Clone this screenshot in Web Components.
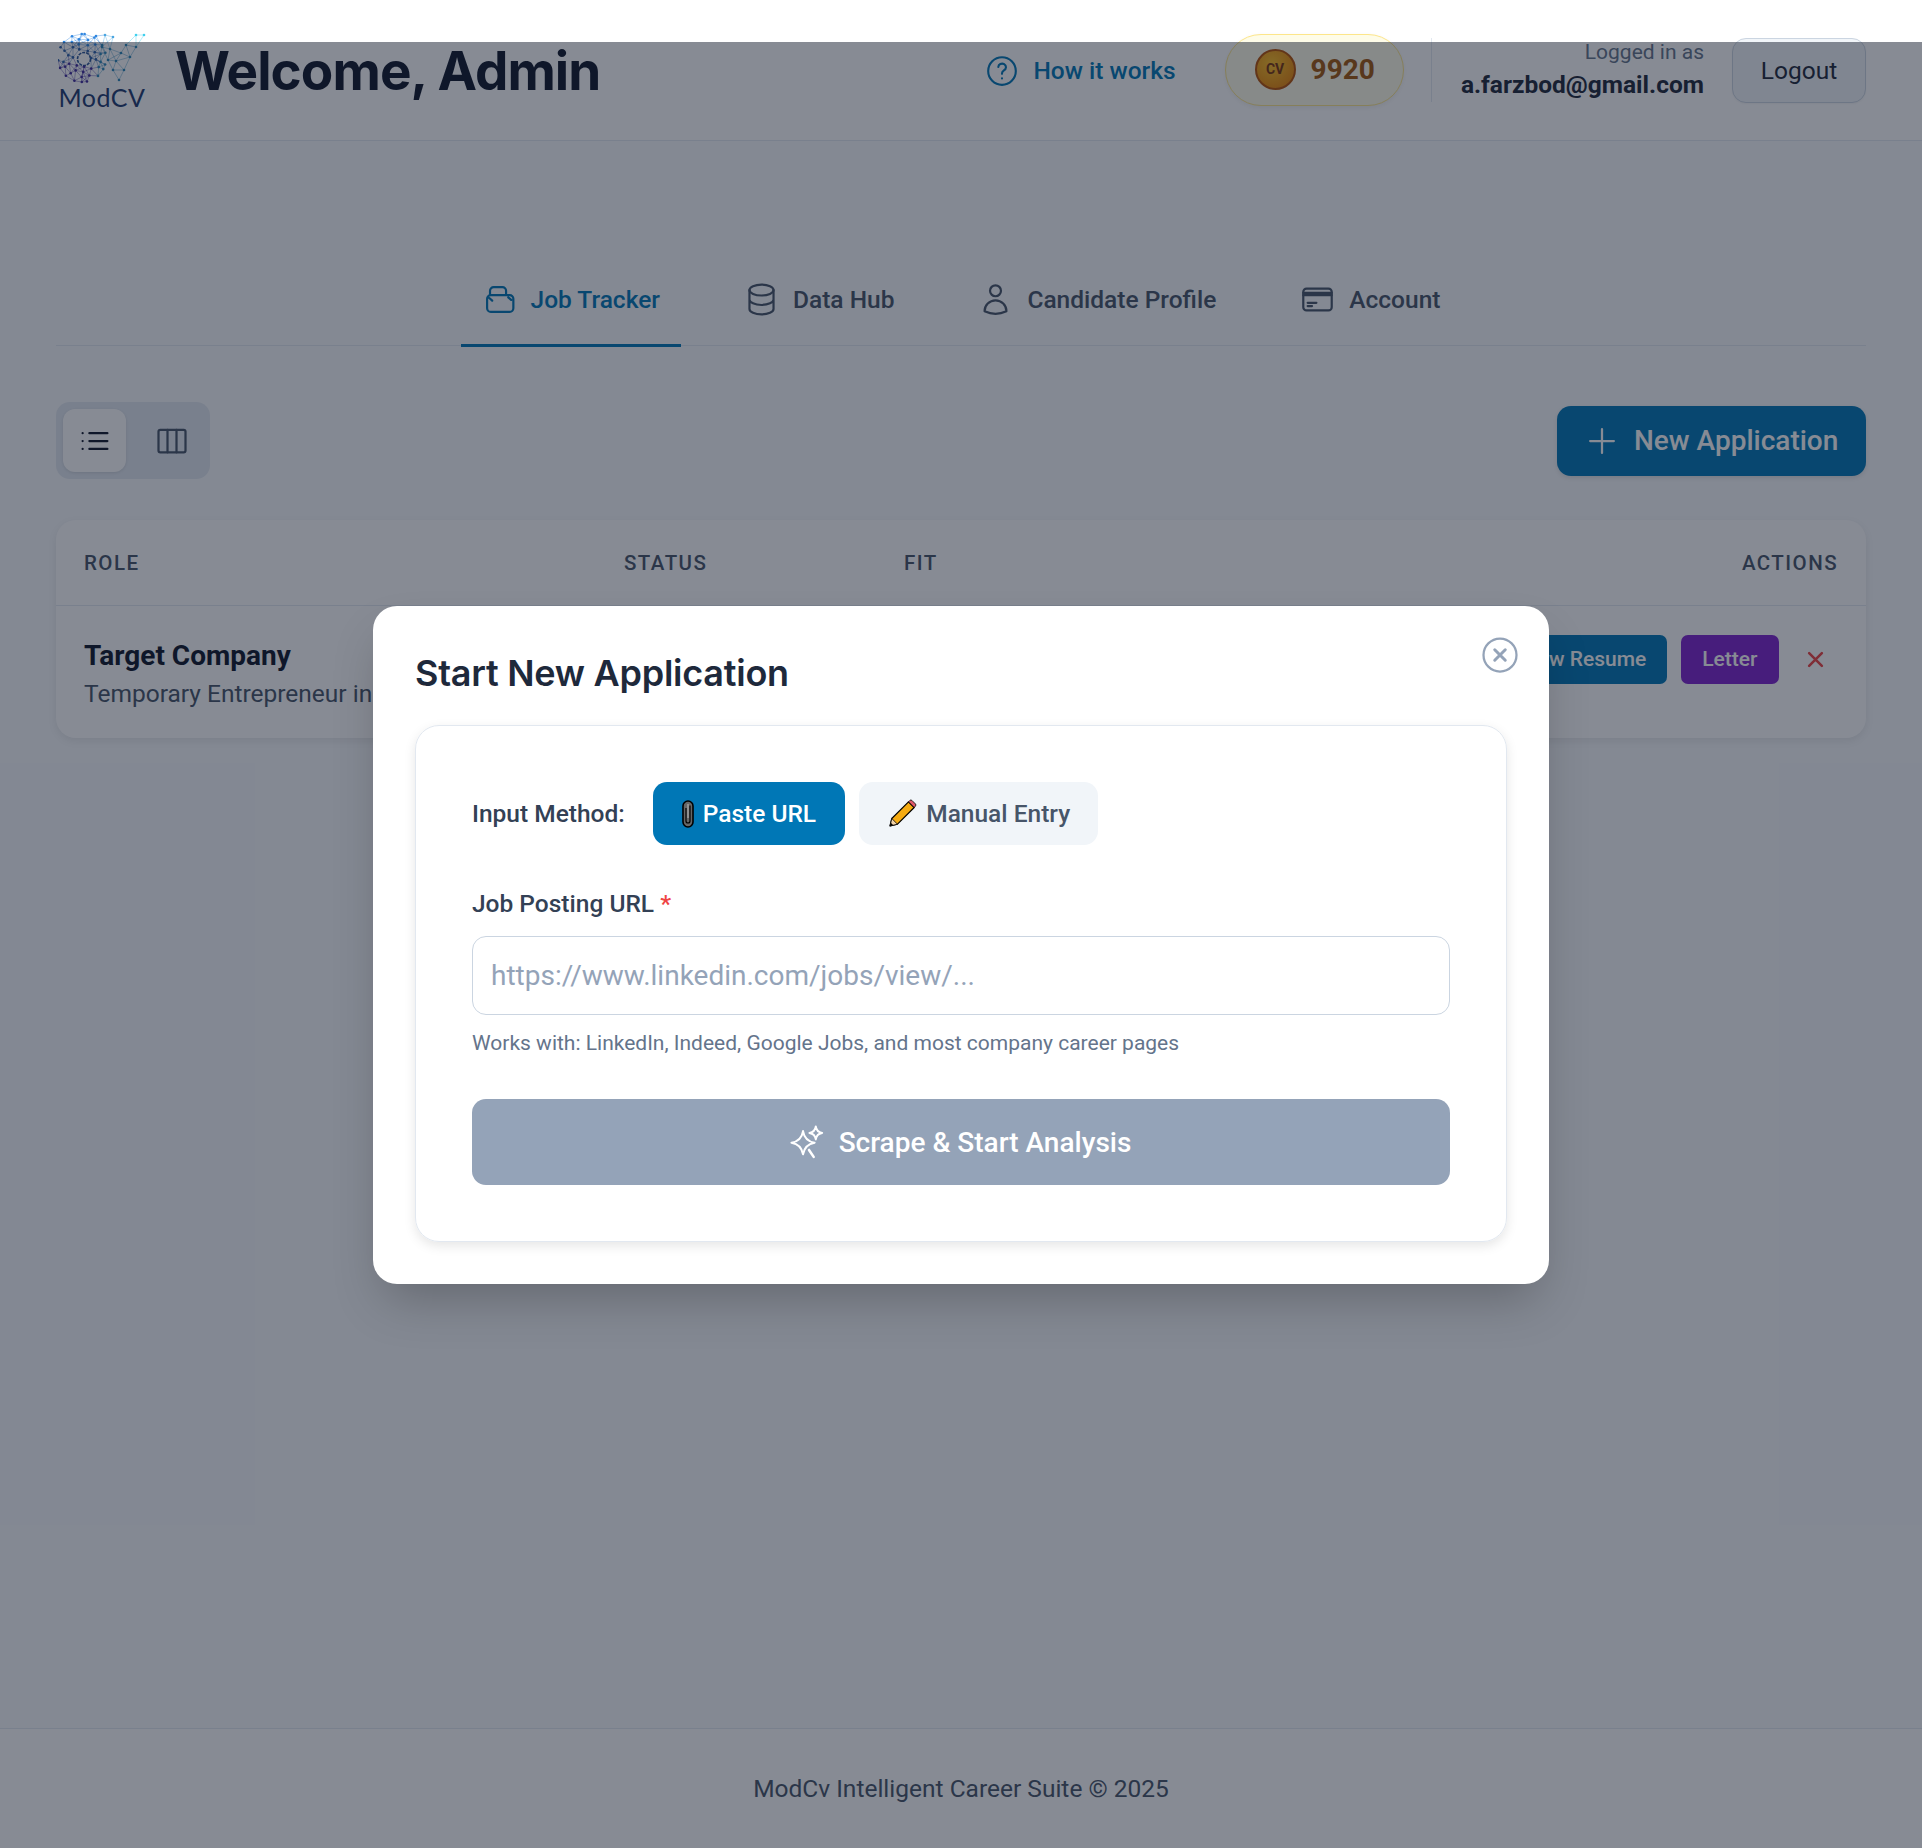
<!DOCTYPE html>
<html>
<head>
<meta charset="utf-8">
<title>ModCV</title>
<style>
  html, body { margin: 0; padding: 0; }
  body { background: #fff; font-family: Roboto, "Liberation Sans", sans-serif; }
</style>
</head>
<body>
<app-page></app-page>

<script>
const HEAD_FONT = 'Inter, "Liberation Sans", sans-serif';

class ModLogo extends HTMLElement {
  connectedCallback() {
    const root = this.attachShadow({mode: 'open'});
    // network mark, the nodes are seeded so every load draws the same thing
    let seed = 7;
    const rnd = () => (seed = (seed * 16807) % 2147483647) / 2147483647;
    const nodes = [];
    for (let r = 9; r <= 24; r += 5) {
      const n = Math.round(r * 0.7);
      for (let i = 0; i < n; i++) {
        const a = i / n * Math.PI * 2 + rnd() * 0.3;
        nodes.push([24 + Math.cos(a) * r, 25 + Math.sin(a) * r]);
      }
    }
    const vPts = [[38,3],[47,2],[55,4],[78,2],[86,2],[44,14],[52,16],[78,14],[50,27],[58,28],[72,24],[55,37],[66,37],[61,47],[68,12],[63,20]];
    const colorAt = (x, y) => {
      if (x > 70 && y < 10) return '#3fd0ee';
      if (x > 46 && y < 10) return '#4aa5e0';
      if (x > 40) return '#2a86b8';
      if (y < 14) return '#2f86e0';
      if (y < 30) return '#2a5fa8';
      return '#3f2b9c';
    };
    const lines = (pts, lim) => {
      let s = '';
      pts.forEach((p, i) => pts.forEach((q, j) => {
        if (j > i && Math.hypot(p[0]-q[0], p[1]-q[1]) < lim)
          s += `<line x1="${p[0].toFixed(1)}" y1="${p[1].toFixed(1)}" x2="${q[0].toFixed(1)}" y2="${q[1].toFixed(1)}" stroke="${colorAt(p[0], p[1])}"/>`;
      }));
      return s;
    };
    const dots = pts => pts.map(p => `<circle cx="${p[0].toFixed(1)}" cy="${p[1].toFixed(1)}" r="1.3" fill="${colorAt(p[0], p[1])}"/>`).join('');
    root.innerHTML = `
      <style>
        :host { display: flex; flex-direction: column; align-items: center; width: 88px; height: 77px; flex: none; }
        svg { display: block; width: 88px; height: 54px; flex: none; }
        span { font: 400 25px/23px Lato, sans-serif; color: #1e3a70; letter-spacing: .5px; }
      </style>
      <svg viewBox="0 -1 88 54" stroke-width=".45" stroke-opacity=".85">
        ${lines(nodes, 11)}${lines(vPts, 15)}
        <circle cx="26" cy="26" r="6.500" fill="none" stroke="#2a5596" stroke-width="1.600" stroke-opacity="1" stroke-dasharray="3 1"/>
        ${dots(nodes)}${dots(vPts)}
      </svg>
      <span>ModCV</span>`;
  }
}

class CoinPill extends HTMLElement {
  constructor() {
    super();
    this.attachShadow({mode: 'open'}).innerHTML = `
      <style>
        :host { display: flex; align-items: center; gap: 15px; box-sizing: border-box; height: 72px; padding: 0 28px 0 29px;
          margin-top: -1px; border: 1px solid #fde68a; border-radius: 36px; background: #fefce8;
          box-shadow: 0 2px 5px rgba(0,0,0,.06); }
        .coin { width: 41px; height: 41px; box-sizing: border-box; border-radius: 50%; border: 2px solid #b45309;
          background: radial-gradient(circle at 40% 35%, #fbbf24, #e8890a 75%);
          color: #78350f; font: 700 14px/37px Roboto, sans-serif; text-align: center; }
        b { font: 700 28px Roboto, sans-serif; color: #a0580f; }
      </style>
      <div class="coin">CV</div><b><slot></slot></b>`;
  }
}

class TabItem extends HTMLElement {
  constructor() {
    super();
    this.attachShadow({mode: 'open'}).innerHTML = `
      <style>
        :host { display: flex; align-items: center; gap: 14px; box-sizing: border-box; height: 101px; padding: 8px 21px 0;
          margin-bottom: -2px; border-bottom: 3px solid transparent;
          font: 500 24.5px Roboto, sans-serif; color: #475569; }
        :host([active]) { color: #0077b6; border-bottom-color: #0077b6; }
        ::slotted(svg) { width: 35px; height: 35px; flex: none; fill: none; stroke: currentColor; stroke-width: 1.5; stroke-linecap: round; stroke-linejoin: round; }
      </style>
      <slot name="icon"></slot><slot></slot>`;
  }
}

class AppHeader extends HTMLElement {
  constructor() {
    super();
    this.attachShadow({mode: 'open'}).innerHTML = `
      <style>
        :host { display: flex; align-items: center; box-sizing: border-box; height: 141px; padding: 0 56px 0 58px;
          background: #fff; border-bottom: 1px solid #e2e8f0; }
        h1 { margin: 0 0 0 29px; padding-top: 2px; font: 700 53px/1 ${HEAD_FONT}; letter-spacing: -.9px; color: #0f172a; white-space: nowrap; }
        .right { margin-left: auto; display: flex; align-items: center; }
        .how { display: flex; align-items: center; gap: 14px; margin-right: 49px; margin-top: 1px; font: 500 24.5px Roboto, sans-serif; color: #0077b6; }
        .how svg { width: 34px; height: 34px; fill: none; stroke: currentColor; stroke-width: 1.5; stroke-linecap: round; stroke-linejoin: round; }
        .sep { width: 1px; height: 64px; background: #e2e8f0; margin: 0 29px 0 27px; }
        .who { display: flex; flex-direction: column; align-items: flex-end; margin-top: -2px; }
        .who span { font: 400 21px/28px Roboto, sans-serif; color: #64748b; margin-bottom: 3px; }
        .who b { font: 700 24.5px/32px Roboto, sans-serif; color: #1e293b; }
        button { margin-left: 28px; height: 65px; width: 134px; border: 1px solid #cbd5e1; border-radius: 14px; background: #f1f5f9;
          font: 400 24.5px Roboto, sans-serif; color: #1e293b; padding: 0; box-shadow: 0 1px 2px rgba(0,0,0,.05); }
      </style>
      <mod-logo></mod-logo>
      <h1>Welcome, Admin</h1>
      <div class="right">
        <div class="how">
          <svg viewBox="0 0 24 24"><circle cx="12" cy="12" r="9.75"/><path d="M9.4 9.2a2.7 2.5 0 1 1 4 2.3c-.9.6-1.4 1-1.4 2v.5M12 17.2v.01"/></svg>
          How it works
        </div>
        <coin-pill>9920</coin-pill>
        <div class="sep"></div>
        <div class="who"><span>Logged in as</span><b>a.farzbod@gmail.com</b></div>
        <button>Logout</button>
      </div>`;
  }
}

class TabBar extends HTMLElement {
  constructor() {
    super();
    this.attachShadow({mode: 'open'}).innerHTML = `
      <style>
        :host { display: flex; justify-content: center; gap: 42px; height: 100px; box-sizing: border-box; border-bottom: 1px solid #e2e8f0; }
      </style>
      <tab-item active>
        <svg slot="icon" viewBox="0 0 24 24"><path d="M3.500 11.500A2.500 2.500 0 0 1 6 9h13a2.500 2.500 0 0 1 2.500 2.500V18a2.500 2.500 0 0 1-2.500 2.500H6A2.500 2.500 0 0 1 3.500 18zM5.500 8V6A2.500 2.500 0 0 1 8 3.500h6A2.500 2.500 0 0 1 16.500 6v2M5 11l2 1.800M18 10.500l2 1.800"/></svg>
        Job Tracker
      </tab-item>
      <tab-item>
        <svg slot="icon" viewBox="0 0 24 24"><ellipse cx="12" cy="5.500" rx="8.250" ry="3.750"/><path d="M3.750 5.500v13c0 2 3.700 3.750 8.250 3.750s8.250-1.750 8.250-3.750v-13M3.750 12c0 2 3.700 3.750 8.250 3.750s8.250-1.750 8.250-3.750"/></svg>
        Data Hub
      </tab-item>
      <tab-item>
        <svg slot="icon" viewBox="0 0 24 24"><circle cx="12" cy="6" r="3.750"/><path d="M4.500 20.100a7.500 7.500 0 0 1 15 0 18 18 0 0 1-15 0z"/></svg>
        Candidate Profile
      </tab-item>
      <tab-item>
        <svg slot="icon" viewBox="0 0 24 24"><rect x="2.250" y="4.500" width="19.500" height="15" rx="2.250"/><path d="M2.250 9h19.500M2.250 7.500h19.500M5.250 14.250h6M5.250 16.500h3"/></svg>
        Account
      </tab-item>`;
  }
}

class ViewToggle extends HTMLElement {
  constructor() {
    super();
    this.attachShadow({mode: 'open'}).innerHTML = `
      <style>
        :host { display: flex; gap: 14px; box-sizing: border-box; width: 154px; height: 77px; padding: 7px; border-radius: 14px; background: #e2e8f0; }
        div { width: 63px; height: 63px; border-radius: 12px; display: flex; align-items: center; justify-content: center; color: #475569; }
        .on { background: #fff; color: #0f172a; box-shadow: 0 1px 3px rgba(0,0,0,.1); }
        svg { width: 36px; height: 36px; fill: none; stroke: currentColor; stroke-width: 1.5; stroke-linecap: round; stroke-linejoin: round; }
      </style>
      <div class="on"><svg viewBox="0 0 24 24"><path d="M8.250 6.750h12M8.250 12h12M8.250 17.250h12M3.750 6.750h.01M3.750 12h.01M3.750 17.250h.01" /></svg></div>
      <div><svg viewBox="0 0 24 24"><rect x="3" y="4.500" width="18" height="15" rx="1.200"/><path d="M9 4.500v15M15 4.500v15"/></svg></div>`;
  }
}

class JobTable extends HTMLElement {
  constructor() {
    super();
    this.attachShadow({mode: 'open'}).innerHTML = `
      <style>
        :host { display: block; margin-top: 41px; background: #fff; border-radius: 20px; box-shadow: 0 3px 8px rgba(0,0,0,.08); overflow: hidden; }
        .row { display: grid; grid-template-columns: 540px 280px 1fr auto; padding: 0 28px; }
        .head { height: 86px; box-sizing: border-box; align-items: center; border-bottom: 1px solid #e2e8f0; font: 500 20.5px Roboto, sans-serif; letter-spacing: 1.45px; color: #475569; }
        .body { height: 132px; align-items: start; }
        .role { padding-top: 32px; }
        .name { font: 700 28px/36px Roboto, sans-serif; color: #0f172a; }
        .sub { font: 400 24.5px/39px Roboto, sans-serif; color: #475569; white-space: nowrap; }
        .actions { display: flex; align-items: center; gap: 14px; grid-column: 4; padding-top: 29px; }
        .btn { height: 49px; padding: 0 21px; border-radius: 7px; color: #fff; font: 500 21px/49px Roboto, sans-serif; }
        .blue { background: #0077b6; }
        .purple { background: #7e22ce; }
        .del { margin-left: 14px; margin-right: 14.500px; width: 17px; height: 17px; color: #ef4444; }
      </style>
      <div class="row head"><span>ROLE</span><span>STATUS</span><span>FIT</span><span>ACTIONS</span></div>
      <div class="row body">
        <div class="role"><div class="name">Target Company</div><div class="sub">Temporary Entrepreneur in</div></div>
        <span></span><span></span>
        <div class="actions">
          <div class="btn blue">View Resume</div>
          <div class="btn purple">Letter</div>
          <svg class="del" viewBox="0 0 16 16" fill="none" stroke="currentColor" stroke-width="2.400" stroke-linecap="round"><path d="M2 2l12 12M14 2L2 14"/></svg>
        </div>
      </div>`;
  }
}

class AppFooter extends HTMLElement {
  constructor() {
    super();
    this.attachShadow({mode: 'open'}).innerHTML = `
      <style>
        :host { display: flex; align-items: center; justify-content: center; height: 119px; border-top: 1px solid #e2e8f0; background: #fff;
          font: 400 24.5px Roboto, sans-serif; color: #475569; }
      </style>
      <slot></slot>`;
  }
}

class NewAppModal extends HTMLElement {
  constructor() {
    super();
    this.attachShadow({mode: 'open'}).innerHTML = `
      <style>
        :host { position: absolute; left: 0; right: 0; top: 42px; bottom: 0; background: rgba(15,23,42,.5); display: flex; justify-content: center; align-items: flex-start; padding-top: 564px; box-sizing: border-box; }
        .modal { position: relative; box-sizing: border-box; width: 1176px; height: 678px; padding: 42px 42px; border-radius: 24px; background: #fff; box-shadow: 0 25px 50px -12px rgba(0,0,0,.25); }
        h2 { margin: 0; font: 600 36px/44px ${HEAD_FONT}; letter-spacing: -.25px; color: #1e293b; padding-top: 1px; transform: translateY(2px); }
        .close { position: absolute; top: 31px; right: 31px; width: 36px; height: 36px; fill: none; stroke: #94a3b8; stroke-width: 1.5; stroke-linecap: round; }
        .card { box-sizing: border-box; height: 517px; margin-top: 32px; padding: 56px; border: 1px solid #e2e8f0; border-radius: 24px; box-shadow: 0 4px 12px rgba(0,0,0,.1); }
        .method { display: flex; align-items: center; font: 500 24.5px Roboto, sans-serif; color: #334155; }
        .method > span { margin-right: 28px; }
        .opt { display: flex; align-items: center; height: 63px; border-radius: 14px; margin-right: 14px; box-sizing: border-box; font-weight: 500; white-space: nowrap; }
        .opt svg { flex: none; }
        .opt.on { background: #0077b6; color: #fff; width: 192px; gap: 9px; padding-left: 29px; }
        .opt.off { background: #f1f5f9; color: #475569; gap: 9.500px; width: 239px; padding-left: 29px; }
        label { display: block; margin-top: 41px; font: 500 24.5px/36px Roboto, sans-serif; color: #334155; }
        label i { font-style: normal; color: #ef4444; }
        .input { box-sizing: border-box; height: 79px; margin-top: 14px; padding: 0 18px; border: 1px solid #cbd5e1; border-radius: 14px;
          font: 400 28px/77px Roboto, sans-serif; color: #94a3b8; }
        .hint { margin-top: 14px; font: 400 21px/28px Roboto, sans-serif; color: #64748b; }
        .go { display: flex; align-items: center; justify-content: center; gap: 14px; height: 86px; margin-top: 42px; border-radius: 14px; background: #94a3b8;
          color: #fff; font: 500 28px Roboto, sans-serif; }
        .go svg { width: 34px; height: 34px; fill: none; stroke: #fff; stroke-width: 1.400; stroke-linejoin: round; stroke-linecap: round; overflow: visible; }
      </style>
      <div class="modal">
        <h2>Start New Application</h2>
        <svg class="close" viewBox="0 0 24 24"><circle cx="12" cy="12" r="11"/><path d="M8.500 8.500l7 7M15.500 8.500l-7 7" stroke-width="2"/></svg>
        <div class="card">
          <div class="method">
            <span>Input Method:</span>
            <div class="opt on">
              <svg width="12" height="28" viewBox="0 0 12 28"><rect x="1" y="1" width="10" height="26" rx="5" fill="#666" stroke="#000" stroke-width="1.600"/><path d="M4 8v13a2 2 0 0 0 4 0V5.500" fill="none" stroke="#000" stroke-width="1.200"/><path d="M6 4v14" stroke="#bbb" stroke-width="1"/></svg>
              Paste URL
            </div>
            <div class="opt off">
              <svg width="29" height="29" viewBox="0 0 29 29"><path d="M2 27l1.800-7.500L20.500 2.800l5.700 5.700L9.500 25.200z" fill="#f5ab13" stroke="#000" stroke-width="1.200" stroke-linejoin="round"/><path d="M20.500 2.800l1.400-1.400a1.500 1.500 0 0 1 2 0l3.600 3.600a1.500 1.500 0 0 1 0 2l-1.300 1.500z" fill="#e0596a" stroke="#000" stroke-width=".8"/><path d="M2 27l1.800-7.500 5.700 5.700z" fill="#f3d3a8" stroke="#000" stroke-width=".8"/><path d="M2 27l.8-3.300 2.500 2.500z" fill="#000"/></svg>
              Manual Entry
            </div>
          </div>
          <label>Job Posting URL <i>*</i></label>
          <div class="input">https://www.linkedin.com/jobs/view/...</div>
          <div class="hint">Works with: LinkedIn, Indeed, Google Jobs, and most company career pages</div>
          <div class="go">
            <svg viewBox="0 0 24 24"><path d="M8.500 4.300Q9.600 11.300 16.700 12.500 9.600 13.700 8.500 20.700 7.400 13.700.3 12.500 7.400 11.300 8.500 4.300z"/><path d="M17.500 1Q18 5 22 5.600 18 6.200 17.500 10.200 17 6.200 13 5.600 17 5 17.500 1z"/><path d="M12.700 17.600L16 22.500" stroke-width="1.800"/></svg>
            Scrape &amp; Start Analysis
          </div>
        </div>
      </div>`;
  }
}

class AppPage extends HTMLElement {
  constructor() {
    super();
    this.attachShadow({mode: 'open'}).innerHTML = `
      <style>
        :host { display: flex; flex-direction: column; position: relative; height: 1848px; background: #f8fafc; overflow: hidden; }
        main { flex: 1; padding: 0 56px; margin-top: 105px; }
        .bar { display: flex; justify-content: space-between; align-items: center; margin-top: 56px; }
        .new { display: flex; align-items: center; gap: 17px; box-sizing: border-box; width: 309px; height: 70px; padding-left: 30px; border-radius: 14px;
          background: #0077b6; color: #fff; font: 500 28px Roboto, sans-serif; box-shadow: 0 2px 4px rgba(0,0,0,.1); }
        .new svg { width: 30px; height: 30px; fill: none; stroke: currentColor; stroke-width: 1.800; stroke-linecap: round; }
      </style>
      <app-header></app-header>
      <main>
        <tab-bar></tab-bar>
        <div class="bar">
          <view-toggle></view-toggle>
          <div class="new"><svg viewBox="0 0 24 24"><path d="M12 2.500v19M2.500 12h19"/></svg>New Application</div>
        </div>
        <job-table></job-table>
      </main>
      <app-footer>ModCv Intelligent Career Suite © 2025</app-footer>
      <new-app-modal></new-app-modal>`;
  }
}

customElements.define('mod-logo', ModLogo);
customElements.define('coin-pill', CoinPill);
customElements.define('tab-item', TabItem);
customElements.define('app-header', AppHeader);
customElements.define('tab-bar', TabBar);
customElements.define('view-toggle', ViewToggle);
customElements.define('job-table', JobTable);
customElements.define('app-footer', AppFooter);
customElements.define('new-app-modal', NewAppModal);
customElements.define('app-page', AppPage);
</script>
</body>
</html>
